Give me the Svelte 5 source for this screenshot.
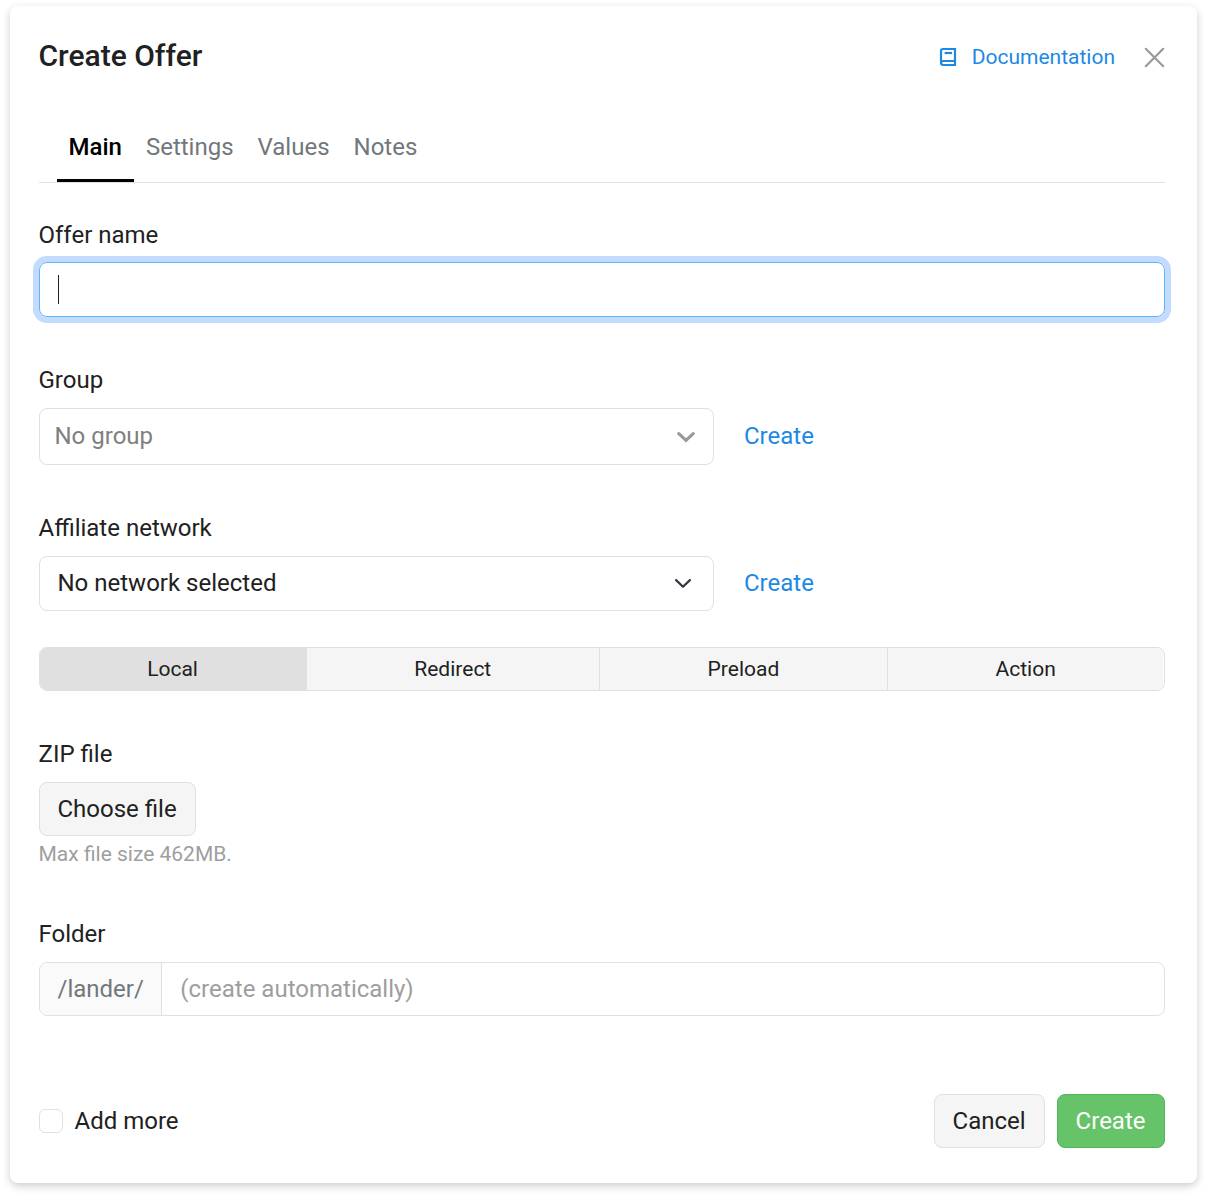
<script lang="ts">
    const tabs = ["Main", "Settings", "Values", "Notes"];
    const types = ["Local", "Redirect", "Preload", "Action"];

    let activeTab = $state("Main");
    let activeType = $state("Local");
    let offerName = $state("");
    let folder = $state("");
    let addMore = $state(false);
</script>

<div class="modal">
    <header class="header">
        <h1 class="title">Create Offer</h1>
        <a class="docs" href="#docs">
            <svg class="docs-icon" width="18" height="20" viewBox="0 0 18 20" fill="none" stroke="currentColor" stroke-width="2.2">
                <path d="M16 14.2V2H4.2Q2 2 2 4.2V15.6Q2 18 4.2 18H16V14H4.2Q2 14 2 16" />
                <path d="M5.6 6H13" />
            </svg>
            <span>Documentation</span>
        </a>
        <button class="close" type="button" aria-label="Close">
            <svg width="20" height="20" viewBox="0 0 20 20" stroke="currentColor" stroke-width="2.2" stroke-linecap="round">
                <path d="M0.8 0.8L18.2 18.2M18.2 0.8L0.8 18.2" />
            </svg>
        </button>
    </header>

    <nav class="tabs">
        {#each tabs as tab}
            <button type="button" class="tab" class:active={tab === activeTab} onclick={() => (activeTab = tab)}>{tab}</button>
        {/each}
    </nav>

    <div class="field name-field">
        <label class="label" for="offer-name">Offer name</label>
        <div class="control focused">
            <span class="caret"></span>
            <input id="offer-name" class="input" type="text" bind:value={offerName} />
        </div>
    </div>

    <div class="field group-field">
        <span class="label">Group</span>
        <div class="row">
            <div class="select group-select">
                <span class="value">No group</span>
                <svg width="18" height="12" viewBox="0 0 18 12" fill="none" stroke="currentColor" stroke-width="3.2" stroke-linecap="round">
                    <path d="M1.8 2.6L9 9.4L16.2 2.6" />
                </svg>
            </div>
            <a class="link" href="#group">Create</a>
        </div>
    </div>

    <div class="field network-field">
        <span class="label">Affiliate network</span>
        <div class="row">
            <div class="select">
                <span class="value">No network selected</span>
                <svg width="16" height="10" viewBox="0 0 16 10" fill="none" stroke="#343a40" stroke-width="2.2" stroke-linecap="round" stroke-linejoin="round">
                    <path d="M1.1 1.1L8 7.8L14.9 1.1" />
                </svg>
            </div>
            <a class="link" href="#network">Create</a>
        </div>
    </div>

    <div class="segments">
        {#each types as type}
            <button type="button" class="segment" class:selected={type === activeType} onclick={() => (activeType = type)}>{type}</button>
        {/each}
    </div>

    <div class="field zip-field">
        <span class="label">ZIP file</span>
        <button type="button" class="button">Choose file</button>
        <p class="hint">Max file size 462MB.</p>
    </div>

    <div class="field folder-field">
        <label class="label" for="folder">Folder</label>
        <div class="control">
            <span class="addon">/lander/</span>
            <input id="folder" class="input" type="text" placeholder="(create automatically)" bind:value={folder} />
        </div>
    </div>

    <footer class="footer">
        <label class="check">
            <input class="checkbox" type="checkbox" bind:checked={addMore} />
            <span>Add more</span>
        </label>
        <button type="button" class="button">Cancel</button>
        <button type="button" class="button primary">Create</button>
    </footer>
</div>

<style>
    :global(body) {
        display: flow-root;
        min-height: 1197px;
        background: #ffffff;
    }

    .modal {
        box-sizing: border-box;
        width: 1187px;
        height: 1177px;
        margin: 6px 10px 0;
        padding: 0 32.5px 0 28.5px;
        display: flow-root;
        border-radius: 8px;
        background: #ffffff;
        box-shadow: 0 3px 9px rgba(0, 0, 0, 0.2);
        font-family: Roboto, sans-serif;
        font-size: 24px;
        color: #212121;
    }

    .modal * {
        box-sizing: border-box;
    }

    button,
    input {
        font: inherit;
        letter-spacing: inherit;
        color: inherit;
    }

    .header {
        display: flex;
        align-items: center;
        height: 102px;
    }

    .title {
        flex: 1;
        margin: 0;
        padding-bottom: 2px;
        font-size: 30px;
        line-height: 36px;
        font-weight: 500;
    }

    .docs {
        display: flex;
        align-items: center;
        gap: 15px;
        font-size: 21px;
        color: #1e88e5;
        text-decoration: none;
    }

    .close {
        display: flex;
        margin-left: 29.5px;
        padding: 1px 0 0;
        border: 0;
        background: none;
        color: #999999;
    }

    .close svg {
        overflow: visible;
    }

    .tabs {
        display: flex;
        height: 75px;
        padding-left: 18px;
        border-bottom: 1px solid #e0e0e0;
    }

    .tab {
        padding: 6px 12px 0;
        border: 0;
        border-bottom: 3px solid transparent;
        background: none;
        color: #72777b;
    }

    .tab.active {
        border-bottom-color: #000000;
        font-weight: 500;
        color: #000000;
    }

    .label {
        display: block;
        height: 36px;
        margin-bottom: 10px;
        line-height: 36px;
    }

    .name-field {
        margin-top: 34px;
    }

    .name-field .label {
        margin-bottom: 9px;
    }

    .group-field {
        margin-top: 45px;
    }

    .network-field {
        margin-top: 45px;
    }

    .zip-field {
        margin-top: 45px;
    }

    .folder-field {
        margin-top: 46px;
    }

    .control {
        display: flex;
        height: 54px;
        border: 1px solid #e0e0e0;
        border-radius: 8px;
    }

    .focused {
        height: 55px;
        align-items: center;
        border-color: #64b5f6;
        box-shadow: 0 0 0 6px #c2dbff;
    }

    .caret {
        width: 1px;
        height: 29px;
        margin-left: 18px;
        background: #212121;
    }

    .input {
        flex: 1;
        min-width: 0;
        padding: 0 18px;
        border: 0;
        border-radius: 8px;
        outline: 0;
        background: none;
    }

    .input::placeholder {
        color: #9e9e9e;
        opacity: 1;
    }

    .addon {
        padding: 0 17.5px 0 18px;
        border-right: 1px solid #e0e0e0;
        border-radius: 7px 0 0 7px;
        background: #fafafa;
        line-height: 52px;
        color: #72777b;
    }

    .row {
        display: flex;
        align-items: center;
        gap: 30.5px;
    }

    .select {
        display: flex;
        align-items: center;
        justify-content: space-between;
        width: 675px;
        height: 55px;
        padding: 0 22px 0 18px;
        border: 1px solid #e0e0e0;
        border-radius: 8px;
    }

    .group-select {
        height: 57px;
        padding: 0 18px 0 15px;
        color: #808080;
    }

    .group-select svg {
        color: #999999;
    }

    .value,
    .link {
        padding-bottom: 2px;
    }

    .link {
        color: #1e88e5;
        text-decoration: none;
    }

    .segments {
        display: flex;
        height: 44px;
        margin-top: 36px;
        border: 1px solid #e0e0e0;
        border-radius: 8px;
        overflow: hidden;
    }

    .segment {
        flex: 1 1 auto;
        padding: 0 18px;
        border: 0;
        border-left: 1px solid #e0e0e0;
        background: #f5f5f5;
        font-size: 21px;
    }

    .segment:first-child {
        border-left: 0;
    }

    .segment.selected {
        background: #e0e0e0;
    }

    .button {
        display: block;
        height: 54px;
        padding: 0 18px;
        border: 1px solid #e0e0e0;
        border-radius: 8px;
        background: #f5f5f5;
    }

    .primary {
        border-color: #4db851;
        background: #66c369;
        color: #ffffff;
    }

    .hint {
        margin: 3px 0 0;
        font-size: 21px;
        line-height: 31px;
        color: #9e9e9e;
    }

    .footer {
        display: flex;
        align-items: center;
        gap: 12px;
        margin-top: 78px;
    }

    .check {
        display: flex;
        flex: 1;
        align-items: center;
        gap: 12px;
    }

    .checkbox {
        appearance: none;
        width: 24px;
        height: 24px;
        margin: 0;
        border: 1px solid #e0e0e0;
        border-radius: 6px;
        background: #ffffff;
    }

    .checkbox:checked {
        background: #1e88e5;
    }
</style>
